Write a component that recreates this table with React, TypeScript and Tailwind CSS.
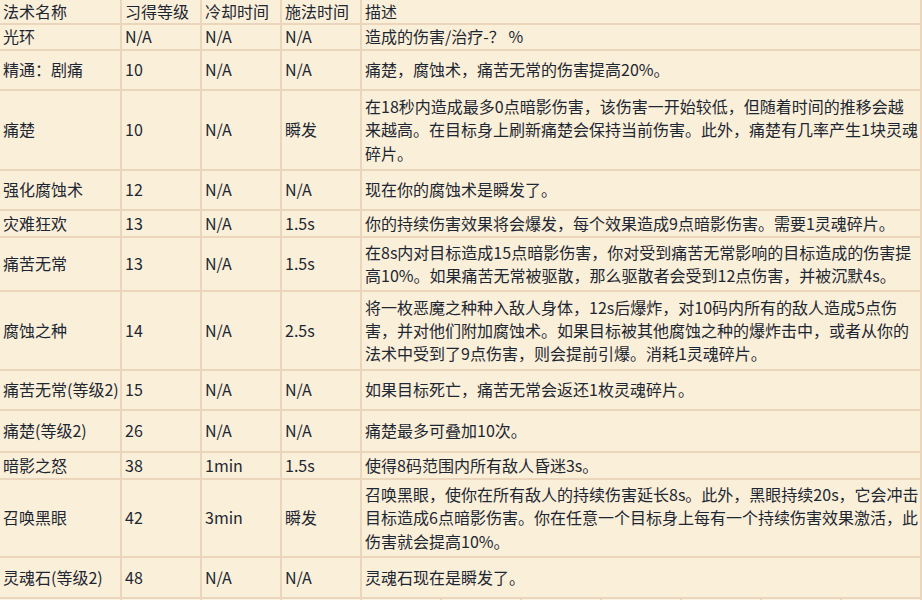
type Spell = {
  name: string;
  level: string;
  cooldown: string;
  cast: string;
  desc: string[];
  h: string;
};

// description lines are kept as the reference breaks them
const spells: Spell[] = [
  { name: "光环", level: "N/A", cooldown: "N/A", cast: "N/A", desc: ["造成的伤害/治疗-？ %"], h: "h-[26px]" },
  { name: "精通：剧痛", level: "10", cooldown: "N/A", cast: "N/A", desc: ["痛楚，腐蚀术，痛苦无常的伤害提高20%。"], h: "h-[40px]" },
  {
    name: "痛楚",
    level: "10",
    cooldown: "N/A",
    cast: "瞬发",
    desc: [
      "在18秒内造成最多0点暗影伤害，该伤害一开始较低，但随着时间的推移会越",
      "来越高。在目标身上刷新痛楚会保持当前伤害。此外，痛楚有几率产生1块灵魂",
      "碎片。",
    ],
    h: "h-[80px]",
  },
  { name: "强化腐蚀术", level: "12", cooldown: "N/A", cast: "N/A", desc: ["现在你的腐蚀术是瞬发了。"], h: "h-[40px]" },
  {
    name: "灾难狂欢",
    level: "13",
    cooldown: "N/A",
    cast: "1.5s",
    desc: ["你的持续伤害效果将会爆发，每个效果造成9点暗影伤害。需要1灵魂碎片。"],
    h: "h-[27px]",
  },
  {
    name: "痛苦无常",
    level: "13",
    cooldown: "N/A",
    cast: "1.5s",
    desc: [
      "在8s内对目标造成15点暗影伤害，你对受到痛苦无常影响的目标造成的伤害提",
      "高10%。如果痛苦无常被驱散，那么驱散者会受到12点伤害，并被沉默4s。",
    ],
    h: "h-[54px]",
  },
  {
    name: "腐蚀之种",
    level: "14",
    cooldown: "N/A",
    cast: "2.5s",
    desc: [
      "将一枚恶魔之种种入敌人身体，12s后爆炸，对10码内所有的敌人造成5点伤",
      "害，并对他们附加腐蚀术。如果目标被其他腐蚀之种的爆炸击中，或者从你的",
      "法术中受到了9点伤害，则会提前引爆。消耗1灵魂碎片。",
    ],
    h: "h-[79px]",
  },
  { name: "痛苦无常(等级2)", level: "15", cooldown: "N/A", cast: "N/A", desc: ["如果目标死亡，痛苦无常会返还1枚灵魂碎片。"], h: "h-[40px]" },
  { name: "痛楚(等级2)", level: "26", cooldown: "N/A", cast: "N/A", desc: ["痛楚最多可叠加10次。"], h: "h-[42px]" },
  { name: "暗影之怒", level: "38", cooldown: "1min", cast: "1.5s", desc: ["使得8码范围内所有敌人昏迷3s。"], h: "h-[27px]" },
  {
    name: "召唤黑眼",
    level: "42",
    cooldown: "3min",
    cast: "瞬发",
    desc: [
      "召唤黑眼，使你在所有敌人的持续伤害延长8s。此外，黑眼持续20s，它会冲击",
      "目标造成6点暗影伤害。你在任意一个目标身上每有一个持续伤害效果激活，此",
      "伤害就会提高10%。",
    ],
    h: "h-[78px]",
  },
  { name: "灵魂石(等级2)", level: "48", cooldown: "N/A", cast: "N/A", desc: ["灵魂石现在是瞬发了。"], h: "h-[41px]" },
];

const cell = "flex items-center border-r-2 border-b-2 border-[#ecd6bb] pl-[3px] whitespace-nowrap overflow-hidden";

function Row({ cols, desc, h }: { cols: string[]; desc: string[]; h: string }) {
  return (
    <>
      {cols.map((c, i) => (
        <div key={i} className={`${cell} ${h}`}>
          <span>{c}</span>
        </div>
      ))}
      <div className={`${cell} ${h}`}>
        <span>
          {desc.map((line, i) => (
            <span key={i}>
              {i > 0 && <br />}
              {line}
            </span>
          ))}
        </span>
      </div>
    </>
  );
}

export default function App() {
  return (
    <div
      className="w-[922px] h-[600px] overflow-hidden bg-[#faefd8] text-[16px] leading-[1.45] text-[#1d2733]"
      style={{ fontFamily: '"Noto Sans CJK SC", "Noto Sans", sans-serif' }}
    >
      {/* spell table */}
      <div className="grid grid-cols-[122px_80px_80px_80px_560px]">
        <Row cols={["法术名称", "习得等级", "冷却时间", "施法时间"]} desc={["描述"]} h="h-[25px]" />
        {spells.map((s) => (
          <Row key={s.name} cols={[s.name, s.level, s.cooldown, s.cast]} desc={s.desc} h={s.h} />
        ))}
      </div>

      {/* next table, cut off at the bottom */}
      <div className="grid grid-cols-[122px_80px_80px_80px_80px_80px_80px_80px_80px_80px_80px]">
        {Array.from({ length: 11 }).map((_, i) => (
          <div key={i} className="h-[20px] border-r-2 border-[#ecd6bb] bg-[#fbf3e4]" />
        ))}
      </div>
    </div>
  );
}
